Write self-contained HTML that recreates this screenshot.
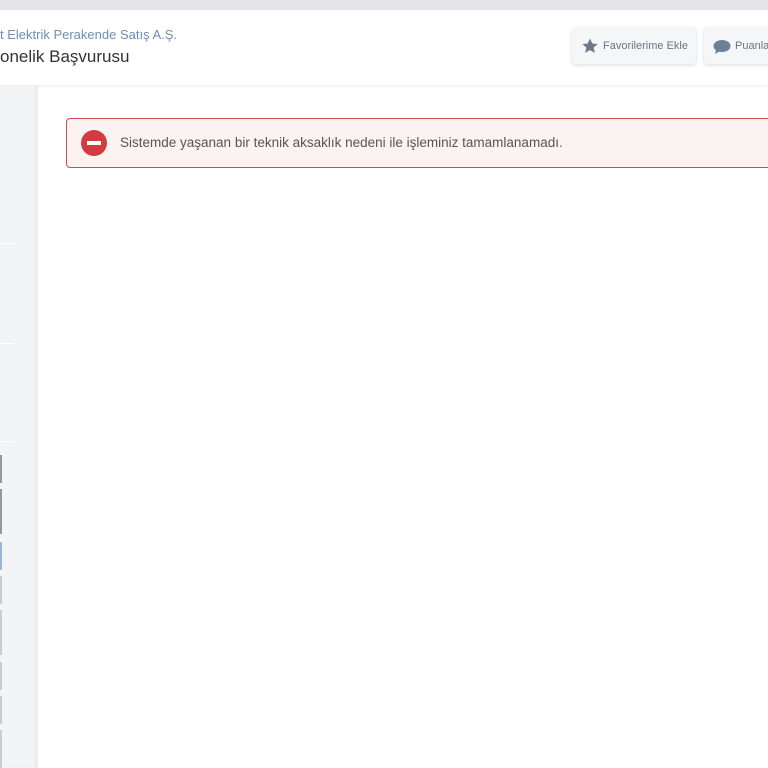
<!DOCTYPE html>
<html><head><meta charset="utf-8"><style>
body{margin:0;width:768px;height:768px;overflow:hidden;background:#fff;font-family:"Liberation Sans",sans-serif;position:relative}
.top{position:absolute;left:0;top:0;width:768px;height:10px;background:#e3e5e8}
.hdr{position:absolute;left:0;top:10px;width:768px;height:75px;background:#fff;box-shadow:0 2px 4px rgba(0,0,0,.05)}
.t1{position:absolute;left:0;top:17px;font-size:13px;color:#6f8db3;white-space:nowrap}
.t2{position:absolute;left:0;top:37px;font-size:17px;color:#333;white-space:nowrap}
.btn{position:absolute;top:18px;height:36px;background:#f5f6f8;border-radius:3px;box-shadow:0 1px 4px rgba(0,0,0,.15);font-size:11px;color:#6b7480;line-height:36px;white-space:nowrap;overflow:hidden}
.side{position:absolute;left:0;top:85px;width:38px;height:683px;background:#f3f4f6;box-shadow:inset -3px 0 3px rgba(0,0,0,.04)}
.ln{position:absolute;left:0;width:15px;height:1px;background:#fff}
.it{position:absolute;left:0;width:2px;background:#bbb}
.alert{position:absolute;left:66px;top:118px;width:720px;height:48px;background:#fbf2f2;border:1px solid #d24a4f;border-radius:4px}
.ic{position:absolute;left:14px;top:11px;width:26px;height:26px;border-radius:50%;background:#d23c41}
.ic:after{content:"";position:absolute;left:6px;top:11px;width:14px;height:4px;background:#fff}
.msg{position:absolute;left:53px;top:16px;font-size:13.5px;color:#555}
</style></head><body>
<div class="top"></div>
<div class="hdr">
<div class="t1">t Elektrik Perakende Satış A.Ş.</div>
<div class="t2">onelik Başvurusu</div>
<div class="btn" style="left:572px;width:124px"><svg style="position:absolute;left:10px;top:10px" width="16" height="16" viewBox="0 0 16 16"><path d="M8 0.5l2.3 5 5.4.5-4.1 3.6 1.3 5.3L8 12.1 3.1 14.9l1.3-5.3L.3 6l5.4-.5z" fill="#6d7a88"/></svg><span style="position:absolute;left:31px">Favorilerime Ekle</span></div>
<div class="btn" style="left:704px;width:80px"><svg style="position:absolute;left:9px;top:11px" width="18" height="16" viewBox="0 0 18 16"><ellipse cx="9" cy="7" rx="8.5" ry="6" fill="#6d8097"/><path d="M3 11l-1 4 5-3z" fill="#6d8097"/></svg><span style="position:absolute;left:31px">Puanla</span></div>
</div>
<div class="side"></div>
<div class="ln" style="top:243px"></div>
<div class="ln" style="top:343px"></div>
<div class="ln" style="top:441px"></div>
<div class="it" style="top:455px;height:28px;background:#999"></div>
<div class="it" style="top:489px;height:45px;background:#999"></div>
<div class="it" style="top:542px;height:28px;background:#9bb8d6"></div>
<div class="it" style="top:576px;height:28px;background:#ccc"></div>
<div class="it" style="top:610px;height:45px;background:#ccc"></div>
<div class="it" style="top:662px;height:28px;background:#ccc"></div>
<div class="it" style="top:696px;height:28px;background:#ccc"></div>
<div class="it" style="top:730px;height:38px;background:#ccc"></div>
<div class="alert"><div class="ic"></div><div class="msg">Sistemde yaşanan bir teknik aksaklık nedeni ile işleminiz tamamlanamadı.</div></div>
</body></html>
